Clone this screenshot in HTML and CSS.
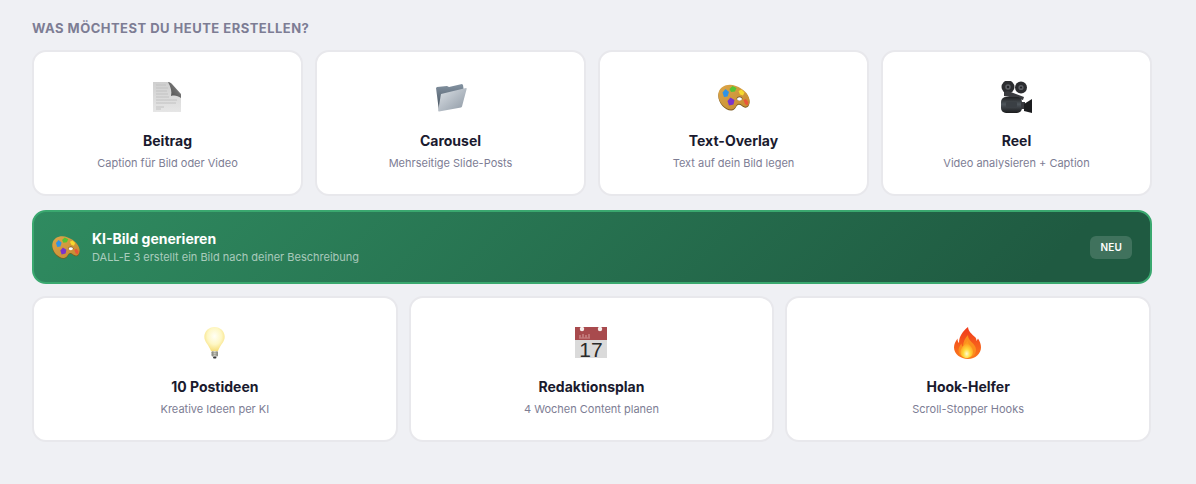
FILE: index.html
```html
<!DOCTYPE html>
<html lang="de">
<head>
    <meta charset="UTF-8">
    <meta name="viewport" content="width=device-width, initial-scale=1.0">
    <title>Was möchtest du heute erstellen?</title>
    <link rel="stylesheet" href="styles.css">
</head>
<body>

    <svg class="icon-defs" width="0" height="0" aria-hidden="true">
        <defs>
            <linearGradient id="doc-page" x1="0" y1="0" x2="0" y2="1">
                <stop offset="0" stop-color="#cfcfcf"/>
                <stop offset="1" stop-color="#e6e6e6"/>
            </linearGradient>
            <linearGradient id="fold-shade" x1="0" y1="1" x2="1" y2="0">
                <stop offset="0" stop-color="#4a4a4a"/>
                <stop offset="0.55" stop-color="#6e6e6e"/>
                <stop offset="1" stop-color="#d8d8d8"/>
            </linearGradient>
            <linearGradient id="folder-front" x1="0" y1="0" x2="1" y2="1">
                <stop offset="0" stop-color="#dde2e7"/>
                <stop offset="1" stop-color="#8c97a3"/>
            </linearGradient>
            <linearGradient id="folder-back" x1="0" y1="0" x2="0" y2="1">
                <stop offset="0" stop-color="#8493a2"/>
                <stop offset="1" stop-color="#3f4b57"/>
            </linearGradient>
            <radialGradient id="bulb-glass" cx="0.5" cy="0.38" r="0.62">
                <stop offset="0" stop-color="#fffff6"/>
                <stop offset="0.55" stop-color="#fef7c4"/>
                <stop offset="1" stop-color="#f6dd76"/>
            </radialGradient>
            <linearGradient id="bulb-base" x1="0" y1="0" x2="1" y2="0">
                <stop offset="0" stop-color="#77776f"/>
                <stop offset="0.5" stop-color="#d6d6cc"/>
                <stop offset="1" stop-color="#77776f"/>
            </linearGradient>
            <radialGradient id="flame-core" cx="0.5" cy="0.75" r="0.6">
                <stop offset="0" stop-color="#fffbd0"/>
                <stop offset="0.45" stop-color="#ffdb3c"/>
                <stop offset="1" stop-color="#ff9a1e"/>
            </radialGradient>
            <linearGradient id="flame-outer" x1="0" y1="0" x2="0" y2="1">
                <stop offset="0" stop-color="#f0391c"/>
                <stop offset="1" stop-color="#fb7a1c"/>
            </linearGradient>
            <linearGradient id="camera-body" x1="0" y1="0" x2="0" y2="1">
                <stop offset="0" stop-color="#1f2022"/>
                <stop offset="0.45" stop-color="#4f565c"/>
                <stop offset="1" stop-color="#1b1c1e"/>
            </linearGradient>
            <linearGradient id="palette-wood" x1="0" y1="0" x2="1" y2="1">
                <stop offset="0" stop-color="#dca648"/>
                <stop offset="1" stop-color="#c48a30"/>
            </linearGradient>

            <symbol id="icon-doc" viewBox="0 0 32 32">
                <path d="M1 1h16l12 13v17H1z" fill="url(#doc-page)"/>
                <path d="M4 4h10M4 7h12M4 10h11M4 13h12M4 16h13M4 19h21M4 22h20M4 26h8M4 28h5" stroke="#c2c2c2" stroke-width="1"/>
                <path d="M16 1c2 0 3 1 4 2l9 10v4c-3-2-6-3-10-2 1-4 0-9-3-14z" fill="url(#fold-shade)"/>
            </symbol>

            <symbol id="icon-folder" viewBox="0 0 32 32">
                <path d="M1 7l1-1 10-1 2 1 13-3 1 1 1 7L5 30H4z" fill="url(#folder-back)"/>
                <path d="M6 13l25-6c.5 0 .8.3.7.8L27 25.500c-.1.5-.4.8-1 .9L4 30.500c-.6 0-.9-.3-.8-.9z" fill="url(#folder-front)"/>
            </symbol>

            <symbol id="icon-palette" viewBox="0 0 32 32">
                <path id="palette-shape" d="M.5 12C2 5 10 2 18 5c7 2.500 13 8 13.500 14 .4 4.500-2 7.500-5 6.500-3-1-4-3.500-6.500-2.500-2.500 1-2 5-6.500 5.500C7 29-1 20 .5 12z" fill="#7c5a20" transform="translate(0 1)"/>
                <path d="M.5 12C2 5 10 2 18 5c7 2.500 13 8 13.500 14 .4 4.500-2 7.500-5 6.500-3-1-4-3.500-6.500-2.500-2.500 1-2 5-6.500 5.500C7 29-1 20 .5 12z" fill="url(#palette-wood)"/>
                <path d="M4.500 11.500l3-3.500 3.500 3-1.500 4.500-3.500.5z" fill="#2f93e6"/>
                <path d="M11.500 8l3-3 4 2-1.500 3.500-4 .5z" fill="#55c436"/>
                <path d="M20.500 10l3-1.500 3 3-1.500 3-3-1z" fill="#f6d92e"/>
                <path d="M9.500 20l3-3.500 4 2.500-1 4.500-4.500 1z" fill="#7a34cc"/>
                <path d="M25.500 19l2.500-1 2.500 3.500-1 3-2.500-1.500z" fill="#e9553a"/>
                <ellipse cx="21.500" cy="17.500" rx="2.800" ry="2" fill="#6b4c1a"/>
                <ellipse cx="21.500" cy="18" rx="2.500" ry="1.700" fill="#ffffff"/>
            </symbol>

            <symbol id="icon-camera" viewBox="0 0 32 32">
                <circle cx="7" cy="6" r="6.500" fill="#2c2d30"/>
                <circle cx="7" cy="6" r="2.800" fill="#5c5e63"/>
                <circle cx="7" cy="6" r="1.200" fill="#232427"/>
                <circle cx="20" cy="6.500" r="6" fill="#2c2d30"/>
                <circle cx="20" cy="6.500" r="2.600" fill="#5c5e63"/>
                <circle cx="20" cy="6.500" r="1.100" fill="#232427"/>
                <path d="M3 11l4-1 16 6-1 3-8-2-11-2z" fill="#3a3b3f"/>
                <rect x="0" y="16" width="21" height="16" rx="5" fill="url(#camera-body)"/>
                <rect x="5" y="21" width="11" height="5" rx="1" fill="#3a3f44"/>
                <rect x="20" y="21" width="4" height="7" fill="#38393d"/>
                <path d="M23 23l8-5v14l-8-2z" fill="#1c1d1f"/>
            </symbol>

            <symbol id="icon-bulb" viewBox="0 0 32 33" overflow="visible">
                <path d="M15.500 0C9.500 0 5 4.500 5 10c0 5.500 4.500 8 7 15h7c2.500-7 7-9.500 7-15 0-5.500-4.500-10-10.500-10z" fill="url(#bulb-glass)"/>
                <rect x="12.500" y="25" width="6.500" height="5.500" rx="1" fill="url(#bulb-base)"/>
                <path d="M12.500 26.500h6.500M12.500 28.500h6.500" stroke="#8f8f86" stroke-width="0.600"/>
                <rect x="14" y="30.500" width="3.500" height="2" rx="1" fill="#38383a"/>
            </symbol>

            <symbol id="icon-calendar" viewBox="0 0 32 32">
                <rect x="0" y="12" width="32" height="19" fill="#dadada"/>
                <rect x="0" y="0" width="32" height="13" fill="#a84a4d"/>
                <circle cx="7" cy="2" r="2.200" fill="#f6f0ee"/>
                <circle cx="25" cy="2" r="2.200" fill="#f6f0ee"/>
                <path d="M5 10.500V8M8 10.500V7M11 10.500V8M14 10.500V7" stroke="#d9a0a0" stroke-width="1"/>
                <path d="M4 11h11" stroke="#d9a0a0" stroke-width="0.800"/>
                <text x="16" y="30" text-anchor="middle" class="cal-day">17</text>
            </symbol>

            <symbol id="icon-flame" viewBox="0 0 32 32">
                <path d="M16 0c.5 5 4 7 7 10 1 1 1.500 2.500 1.500 4 .5-1 1-1.500 1.500-2.500 2 3 3 6 3 9 0 6-5.500 11.500-13 11.500S2 27 2 20.500c0-3.500 1.500-6 3.500-9 0 2 .5 3.500 1.500 4.500C7 9 11 4 16 0z" fill="url(#flame-outer)"/>
                <path d="M16 8c0 4 3 6 5.500 9 1.500 2 2.500 3.500 2.500 6 0 5-4 8-9 8-4.500 0-8.500-3-8.500-7.500 0-3 1.500-5 3-7 0 1.500.5 2.500 1.500 3C11 15 13 11 16 8z" fill="#fb8f1e"/>
                <path d="M15.500 14c.5 3 3 4.500 4.500 7 1 2 1 3 1 4 0 3.500-3 6-6.500 6S8.500 28.500 8.500 25c0-4 4-7 7-11z" fill="url(#flame-core)"/>
            </symbol>
        </defs>
    </svg>

    <main class="page">
        <h2 class="section-title">Was möchtest du heute erstellen?</h2>

        <div class="card-row card-row-4">
            <div class="card">
                <svg class="card-icon"><use href="#icon-doc"/></svg>
                <h3>Beitrag</h3>
                <p>Caption für Bild oder Video</p>
            </div>
            <div class="card">
                <svg class="card-icon"><use href="#icon-folder"/></svg>
                <h3>Carousel</h3>
                <p>Mehrseitige Slide-Posts</p>
            </div>
            <div class="card">
                <svg class="card-icon"><use href="#icon-palette"/></svg>
                <h3>Text-Overlay</h3>
                <p>Text auf dein Bild legen</p>
            </div>
            <div class="card">
                <svg class="card-icon"><use href="#icon-camera"/></svg>
                <h3>Reel</h3>
                <p>Video analysieren + Caption</p>
            </div>
        </div>

        <div class="banner">
            <svg class="banner-icon"><use href="#icon-palette"/></svg>
            <div class="banner-text">
                <h3>KI-Bild generieren</h3>
                <p>DALL-E 3 erstellt ein Bild nach deiner Beschreibung</p>
            </div>
            <span class="badge">NEU</span>
        </div>

        <div class="card-row card-row-3">
            <div class="card">
                <svg class="card-icon"><use href="#icon-bulb"/></svg>
                <h3>10 Postideen</h3>
                <p>Kreative Ideen per KI</p>
            </div>
            <div class="card">
                <svg class="card-icon"><use href="#icon-calendar"/></svg>
                <h3>Redaktionsplan</h3>
                <p>4 Wochen Content planen</p>
            </div>
            <div class="card">
                <svg class="card-icon"><use href="#icon-flame"/></svg>
                <h3>Hook-Helfer</h3>
                <p>Scroll-Stopper Hooks</p>
            </div>
        </div>
    </main>

</body>
</html>
```

FILE: styles.css
```css
/* Global Styles */
body {
    font-family: Inter, "Liberation Sans", sans-serif;
    margin: 0;
    padding: 0;
    background-color: #eff0f4;
    color: #1a1a2e;
}

.icon-defs {
    position: absolute;
}

.page {
    width: 1120px;
    padding: 20px 0 0 32px;
}

.section-title {
    margin: 0 0 13px;
    font-size: 13px;
    line-height: 17px;
    font-weight: 700;
    letter-spacing: 0.48px;
    text-transform: uppercase;
    color: #7d7d94;
}

.card-row {
    display: grid;
    gap: 12px;
}

.card-row-4 {
    grid-template-columns: repeat(4, 1fr);
}

.card-row-3 {
    grid-template-columns: repeat(3, 1fr);
    gap: 11px;
    margin-right: 1px;
}

.card {
    display: flex;
    flex-direction: column;
    align-items: center;
    height: 146px;
    box-sizing: border-box;
    padding-top: 29px;
    background-color: #ffffff;
    border: 2px solid #e8e8ec;
    border-radius: 14px;
}

.card-icon {
    width: 32px;
    height: 32px;
    overflow: visible;
}

.card h3 {
    margin: 18px 0 0;
    font-size: 14px;
    line-height: 20px;
    font-weight: 700;
    color: #1a1a2e;
}

.card p {
    margin: 4px 0 0;
    font-size: 11px;
    line-height: 16px;
    color: #7d7d94;
}

.banner {
    display: flex;
    align-items: center;
    height: 74px;
    box-sizing: border-box;
    margin: 14px 0 12px;
    padding: 0 18px;
    background: linear-gradient(135deg, #2f8b60, #1f5a41 90%);
    border: 2px solid #3aa86f;
    border-radius: 14px;
}

.banner-icon {
    width: 28px;
    height: 28px;
    margin-right: 12px;
}

.banner-text {
    flex: 1;
}

.banner-text h3 {
    margin: 0;
    font-size: 14px;
    line-height: 20px;
    font-weight: 700;
    color: #ffffff;
}

.banner-text p {
    margin: 0;
    font-size: 11px;
    line-height: 16px;
    color: rgba(255, 255, 255, 0.6);
}

.badge {
    padding: 4px 10px;
    font-size: 10px;
    line-height: 15px;
    font-weight: 600;
    letter-spacing: 0.2px;
    color: #ffffff;
    background-color: rgba(255, 255, 255, 0.15);
    border-radius: 6px;
}

.cal-day {
    font-family: "Liberation Sans", sans-serif;
    font-size: 21px;
    fill: #2a2a2a;
}
```
